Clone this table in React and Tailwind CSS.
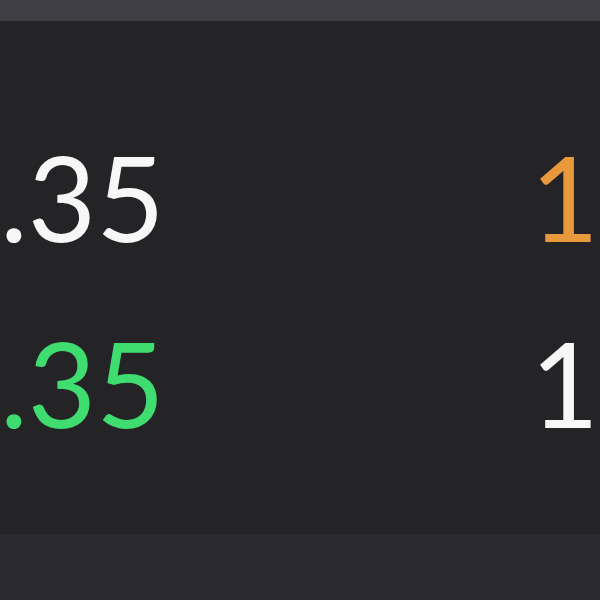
export default function App() {
  return (
    <div className="w-[600px] h-[600px] overflow-hidden flex flex-col bg-[#242427]" style={{ fontFamily: "Lato, 'Noto Sans', sans-serif" }}>
      <div className="h-[21px] bg-[#3e3e44] shrink-0" />
      <div className="flex-1 flex flex-col pt-[83px]">
        <div className="flex justify-between items-center h-[186px] pl-0 pr-[1px] leading-none text-[118px] font-normal">
          <span className="text-[#f7f7f7]">.35</span>
          <span className="text-[#e8993b]">1</span>
        </div>
        <div className="flex justify-between items-center h-[186px] pl-0 pr-[1px] leading-none text-[118px] font-normal">
          <span className="text-[#3fdc70]">.35</span>
          <span className="text-[#f7f7f7]">1</span>
        </div>
      </div>
      <div className="h-[66px] bg-[#2a2a30] shrink-0" />
    </div>
  );
}
